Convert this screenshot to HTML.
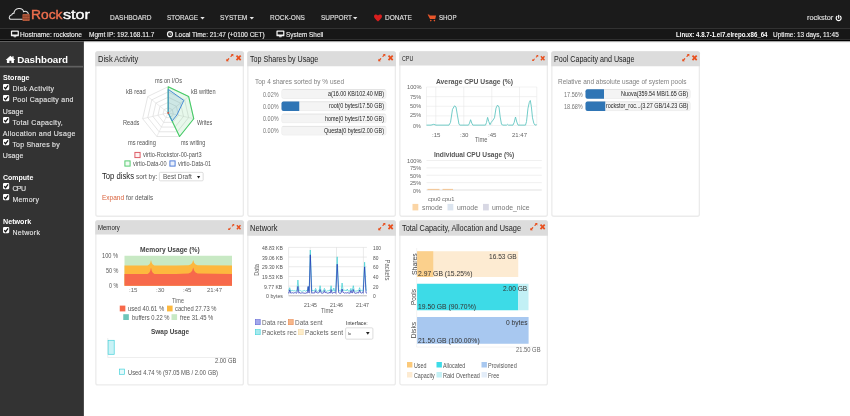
<!DOCTYPE html>
<html><head><meta charset="utf-8"><title>Rockstor Dashboard</title>
<style>
html,body{margin:0;padding:0;}
body{width:850px;height:416px;overflow:hidden;background:#fff;position:relative;font-family:'Liberation Sans', sans-serif;}
svg{position:absolute;overflow:visible}
</style></head><body>
<svg style="left:0;top:0" width="850" height="416" viewBox="0 0 850 416">
<rect x="0" y="0" width="850" height="28.2" fill="#1b1b1b"/>
<rect x="0" y="28.2" width="850" height="11.6" fill="#171717"/><rect x="0" y="28.2" width="850" height="0.6" fill="#2e2e2e"/>
<rect x="0" y="39.7" width="850" height="1.5" fill="#000"/><rect x="0" y="41.2" width="850" height="0.8" fill="rgba(0,0,0,0.22)"/><rect x="0" y="42.0" width="850" height="0.9" fill="rgba(0,0,0,0.06)"/>
<rect x="0" y="41.4" width="83.6" height="375" fill="#333"/><rect x="83.0" y="41.4" width="0.6" height="375" fill="#2a2a2a"/>
<rect x="0" y="65.8" width="83" height="1.7" fill="#606060"/>
<path d="M97.80 51.85 H241.40 A1.9500000000000002 1.9500000000000002 0 0 1 243.35 53.80 V214.30 A1.9500000000000002 1.9500000000000002 0 0 1 241.40 216.25 H97.80 A1.9500000000000002 1.9500000000000002 0 0 1 95.85 214.30 V53.80 A1.9500000000000002 1.9500000000000002 0 0 1 97.80 51.85 Z" fill="#fff" stroke="#ebebeb" stroke-width="1.3"/>
<path d="M97.60 51.20 H241.60 A2.4 2.4 0 0 1 244.00 53.60 V66.30 H95.20 V53.60 A2.4 2.4 0 0 1 97.60 51.20 Z" fill="#dcdcdc"/>
<path d="M249.80 51.85 H393.40 A1.9500000000000002 1.9500000000000002 0 0 1 395.35 53.80 V214.30 A1.9500000000000002 1.9500000000000002 0 0 1 393.40 216.25 H249.80 A1.9500000000000002 1.9500000000000002 0 0 1 247.85 214.30 V53.80 A1.9500000000000002 1.9500000000000002 0 0 1 249.80 51.85 Z" fill="#fff" stroke="#ebebeb" stroke-width="1.3"/>
<path d="M249.60 51.20 H393.60 A2.4 2.4 0 0 1 396.00 53.60 V66.30 H247.20 V53.60 A2.4 2.4 0 0 1 249.60 51.20 Z" fill="#dcdcdc"/>
<path d="M401.80 51.85 H545.40 A1.9500000000000002 1.9500000000000002 0 0 1 547.35 53.80 V214.30 A1.9500000000000002 1.9500000000000002 0 0 1 545.40 216.25 H401.80 A1.9500000000000002 1.9500000000000002 0 0 1 399.85 214.30 V53.80 A1.9500000000000002 1.9500000000000002 0 0 1 401.80 51.85 Z" fill="#fff" stroke="#ebebeb" stroke-width="1.3"/>
<path d="M401.60 51.20 H545.60 A2.4 2.4 0 0 1 548.00 53.60 V65.50 H399.20 V53.60 A2.4 2.4 0 0 1 401.60 51.20 Z" fill="#dcdcdc"/>
<path d="M553.80 51.85 H697.40 A1.9500000000000002 1.9500000000000002 0 0 1 699.35 53.80 V214.30 A1.9500000000000002 1.9500000000000002 0 0 1 697.40 216.25 H553.80 A1.9500000000000002 1.9500000000000002 0 0 1 551.85 214.30 V53.80 A1.9500000000000002 1.9500000000000002 0 0 1 553.80 51.85 Z" fill="#fff" stroke="#ebebeb" stroke-width="1.3"/>
<path d="M553.60 51.20 H697.60 A2.4 2.4 0 0 1 700.00 53.60 V66.30 H551.20 V53.60 A2.4 2.4 0 0 1 553.60 51.20 Z" fill="#dcdcdc"/>
<path d="M97.80 220.85 H241.40 A1.9500000000000002 1.9500000000000002 0 0 1 243.35 222.80 V383.00 A1.9500000000000002 1.9500000000000002 0 0 1 241.40 384.95 H97.80 A1.9500000000000002 1.9500000000000002 0 0 1 95.85 383.00 V222.80 A1.9500000000000002 1.9500000000000002 0 0 1 97.80 220.85 Z" fill="#fff" stroke="#ebebeb" stroke-width="1.3"/>
<path d="M97.60 220.20 H241.60 A2.4 2.4 0 0 1 244.00 222.60 V234.50 H95.20 V222.60 A2.4 2.4 0 0 1 97.60 220.20 Z" fill="#dcdcdc"/>
<path d="M249.80 220.85 H393.40 A1.9500000000000002 1.9500000000000002 0 0 1 395.35 222.80 V383.00 A1.9500000000000002 1.9500000000000002 0 0 1 393.40 384.95 H249.80 A1.9500000000000002 1.9500000000000002 0 0 1 247.85 383.00 V222.80 A1.9500000000000002 1.9500000000000002 0 0 1 249.80 220.85 Z" fill="#fff" stroke="#ebebeb" stroke-width="1.3"/>
<path d="M249.60 220.20 H393.60 A2.4 2.4 0 0 1 396.00 222.60 V235.70 H247.20 V222.60 A2.4 2.4 0 0 1 249.60 220.20 Z" fill="#dcdcdc"/>
<path d="M401.80 220.85 H545.40 A1.9500000000000002 1.9500000000000002 0 0 1 547.35 222.80 V383.00 A1.9500000000000002 1.9500000000000002 0 0 1 545.40 384.95 H401.80 A1.9500000000000002 1.9500000000000002 0 0 1 399.85 383.00 V222.80 A1.9500000000000002 1.9500000000000002 0 0 1 401.80 220.85 Z" fill="#fff" stroke="#ebebeb" stroke-width="1.3"/>
<path d="M401.60 220.20 H545.60 A2.4 2.4 0 0 1 548.00 222.60 V235.70 H399.20 V222.60 A2.4 2.4 0 0 1 401.60 220.20 Z" fill="#dcdcdc"/>
<path d="M160.40 172.35 H202.10 A1.0499999999999998 1.0499999999999998 0 0 1 203.15 173.40 V179.80 A1.0499999999999998 1.0499999999999998 0 0 1 202.10 180.85 H160.40 A1.0499999999999998 1.0499999999999998 0 0 1 159.35 179.80 V173.40 A1.0499999999999998 1.0499999999999998 0 0 1 160.40 172.35 Z" fill="#fff" stroke="#cfcfcf" stroke-width="0.7"/>
<path d="M283.50 89.30 H384.30 A2.0 2.0 0 0 1 386.30 91.30 V96.70 A2.0 2.0 0 0 1 384.30 98.70 H283.50 A2.0 2.0 0 0 1 281.50 96.70 V91.30 A2.0 2.0 0 0 1 283.50 89.30 Z" fill="#f4f4f4"/><path d="M283.50 89.50 H384.30 A1.8 1.8 0 0 1 386.10 91.30 V96.70 A1.8 1.8 0 0 1 384.30 98.50 H283.50 A1.8 1.8 0 0 1 281.70 96.70 V91.30 A1.8 1.8 0 0 1 283.50 89.50 Z" fill="none" stroke="rgba(0,0,0,0.07)" stroke-width="0.4"/><rect x="282.5" y="89.3" width="102.8" height="0.7" fill="rgba(0,0,0,0.07)"/>
<path d="M283.50 101.50 H384.30 A2.0 2.0 0 0 1 386.30 103.50 V108.90 A2.0 2.0 0 0 1 384.30 110.90 H283.50 A2.0 2.0 0 0 1 281.50 108.90 V103.50 A2.0 2.0 0 0 1 283.50 101.50 Z" fill="#f4f4f4"/><path d="M283.50 101.70 H384.30 A1.8 1.8 0 0 1 386.10 103.50 V108.90 A1.8 1.8 0 0 1 384.30 110.70 H283.50 A1.8 1.8 0 0 1 281.70 108.90 V103.50 A1.8 1.8 0 0 1 283.50 101.70 Z" fill="none" stroke="rgba(0,0,0,0.07)" stroke-width="0.4"/><rect x="282.5" y="101.5" width="102.8" height="0.7" fill="rgba(0,0,0,0.07)"/>
<path d="M283.50 101.50 H299.25 V110.90 H283.50 A2.0 2.0 0 0 1 281.50 108.90 V103.50 A2.0 2.0 0 0 1 283.50 101.50 Z" fill="#2f75b5"/>
<path d="M283.50 113.70 H384.30 A2.0 2.0 0 0 1 386.30 115.70 V121.10 A2.0 2.0 0 0 1 384.30 123.10 H283.50 A2.0 2.0 0 0 1 281.50 121.10 V115.70 A2.0 2.0 0 0 1 283.50 113.70 Z" fill="#f4f4f4"/><path d="M283.50 113.90 H384.30 A1.8 1.8 0 0 1 386.10 115.70 V121.10 A1.8 1.8 0 0 1 384.30 122.90 H283.50 A1.8 1.8 0 0 1 281.70 121.10 V115.70 A1.8 1.8 0 0 1 283.50 113.90 Z" fill="none" stroke="rgba(0,0,0,0.07)" stroke-width="0.4"/><rect x="282.5" y="113.7" width="102.8" height="0.7" fill="rgba(0,0,0,0.07)"/>
<path d="M283.50 125.90 H384.30 A2.0 2.0 0 0 1 386.30 127.90 V133.30 A2.0 2.0 0 0 1 384.30 135.30 H283.50 A2.0 2.0 0 0 1 281.50 133.30 V127.90 A2.0 2.0 0 0 1 283.50 125.90 Z" fill="#f4f4f4"/><path d="M283.50 126.10 H384.30 A1.8 1.8 0 0 1 386.10 127.90 V133.30 A1.8 1.8 0 0 1 384.30 135.10 H283.50 A1.8 1.8 0 0 1 281.70 133.30 V127.90 A1.8 1.8 0 0 1 283.50 126.10 Z" fill="none" stroke="rgba(0,0,0,0.07)" stroke-width="0.4"/><rect x="282.5" y="125.9" width="102.8" height="0.7" fill="rgba(0,0,0,0.07)"/>
<path d="M587.50 89.30 H688.50 A2.0 2.0 0 0 1 690.50 91.30 V96.70 A2.0 2.0 0 0 1 688.50 98.70 H587.50 A2.0 2.0 0 0 1 585.50 96.70 V91.30 A2.0 2.0 0 0 1 587.50 89.30 Z" fill="#f4f4f4"/><path d="M587.50 89.50 H688.50 A1.8 1.8 0 0 1 690.30 91.30 V96.70 A1.8 1.8 0 0 1 688.50 98.50 H587.50 A1.8 1.8 0 0 1 585.70 96.70 V91.30 A1.8 1.8 0 0 1 587.50 89.50 Z" fill="none" stroke="rgba(0,0,0,0.07)" stroke-width="0.4"/><rect x="586.5" y="89.3" width="103" height="0.7" fill="rgba(0,0,0,0.07)"/>
<path d="M587.50 89.30 H604.00 V98.70 H587.50 A2.0 2.0 0 0 1 585.50 96.70 V91.30 A2.0 2.0 0 0 1 587.50 89.30 Z" fill="#2f75b5"/>
<path d="M587.50 101.50 H688.50 A2.0 2.0 0 0 1 690.50 103.50 V108.90 A2.0 2.0 0 0 1 688.50 110.90 H587.50 A2.0 2.0 0 0 1 585.50 108.90 V103.50 A2.0 2.0 0 0 1 587.50 101.50 Z" fill="#f4f4f4"/><path d="M587.50 101.70 H688.50 A1.8 1.8 0 0 1 690.30 103.50 V108.90 A1.8 1.8 0 0 1 688.50 110.70 H587.50 A1.8 1.8 0 0 1 585.70 108.90 V103.50 A1.8 1.8 0 0 1 587.50 101.70 Z" fill="none" stroke="rgba(0,0,0,0.07)" stroke-width="0.4"/><rect x="586.5" y="101.5" width="103" height="0.7" fill="rgba(0,0,0,0.07)"/>
<path d="M587.50 101.50 H605.25 V110.90 H587.50 A2.0 2.0 0 0 1 585.50 108.90 V103.50 A2.0 2.0 0 0 1 587.50 101.50 Z" fill="#2f75b5"/>
<path d="M346.65 327.85 H371.85 A1.0499999999999998 1.0499999999999998 0 0 1 372.90 328.90 V338.10 A1.0499999999999998 1.0499999999999998 0 0 1 371.85 339.15 H346.65 A1.0499999999999998 1.0499999999999998 0 0 1 345.60 338.10 V328.90 A1.0499999999999998 1.0499999999999998 0 0 1 346.65 327.85 Z" fill="#fff" stroke="#cfcfcf" stroke-width="0.7"/>
<rect x="417" y="251.25" width="101.25" height="25.75" fill="#fdebd2"/>
<rect x="417" y="251.25" width="16.25" height="25.75" fill="#fbd08c"/>
<rect x="417" y="283.75" width="101.25" height="26.5" fill="#3ddbe7"/>
<rect x="518.25" y="283.75" width="10.25" height="26.5" fill="#c2f0f5"/>
<rect x="417" y="317" width="111.6" height="26.75" fill="#a8c8f0"/>
<rect x="416.6" y="248" width="0.5" height="99" fill="#e6e6e6"/>
<rect x="416.6" y="346.8" width="124" height="0.5" fill="#e6e6e6"/>
<rect x="407" y="362" width="5.4" height="5.5" fill="#fbc97a"/>
<rect x="436.5" y="362" width="5.4" height="5.5" fill="#3ddbe7"/>
<rect x="481.5" y="362" width="5.4" height="5.5" fill="#a8c8f0"/>
<rect x="407" y="372" width="5.4" height="5.5" fill="#fdebd2"/>
<rect x="436.5" y="372" width="5.4" height="5.5" fill="#c2f0f5"/>
<rect x="481.5" y="372" width="5.4" height="5.5" fill="#e3edf9"/>
</svg>
<svg style="left:225.90px;top:54.25px" width="15.40" height="7.60" viewBox="0 0 15.4 7.6"><g fill="#e8501f" stroke="none"><path d="M7.3 0 L7.3 2.5 L4.8 0 Z"/><path d="M0.4 7.2 L0.4 4.7 L2.9 7.2 Z"/></g><path d="M6.6 0.7 L5.0 2.45 M1.1 6.5 L2.7 4.75" stroke="#e8501f" stroke-width="1.2" stroke-linecap="round" fill="none"/><path d="M10.5 1.6 L14.7 6.1 M14.7 1.6 L10.5 6.1" stroke="#e8501f" stroke-width="1.75" fill="none"/></svg>
<svg style="left:377.90px;top:54.25px" width="15.40" height="7.60" viewBox="0 0 15.4 7.6"><g fill="#e8501f" stroke="none"><path d="M7.3 0 L7.3 2.5 L4.8 0 Z"/><path d="M0.4 7.2 L0.4 4.7 L2.9 7.2 Z"/></g><path d="M6.6 0.7 L5.0 2.45 M1.1 6.5 L2.7 4.75" stroke="#e8501f" stroke-width="1.2" stroke-linecap="round" fill="none"/><path d="M10.5 1.6 L14.7 6.1 M14.7 1.6 L10.5 6.1" stroke="#e8501f" stroke-width="1.75" fill="none"/></svg>
<svg style="left:532.12px;top:54.52px" width="13.09" height="6.46" viewBox="0 0 15.4 7.6"><g fill="#e8501f" stroke="none"><path d="M7.3 0 L7.3 2.5 L4.8 0 Z"/><path d="M0.4 7.2 L0.4 4.7 L2.9 7.2 Z"/></g><path d="M6.6 0.7 L5.0 2.45 M1.1 6.5 L2.7 4.75" stroke="#e8501f" stroke-width="1.2" stroke-linecap="round" fill="none"/><path d="M10.5 1.6 L14.7 6.1 M14.7 1.6 L10.5 6.1" stroke="#e8501f" stroke-width="1.75" fill="none"/></svg>
<svg style="left:681.90px;top:54.25px" width="15.40" height="7.60" viewBox="0 0 15.4 7.6"><g fill="#e8501f" stroke="none"><path d="M7.3 0 L7.3 2.5 L4.8 0 Z"/><path d="M0.4 7.2 L0.4 4.7 L2.9 7.2 Z"/></g><path d="M6.6 0.7 L5.0 2.45 M1.1 6.5 L2.7 4.75" stroke="#e8501f" stroke-width="1.2" stroke-linecap="round" fill="none"/><path d="M10.5 1.6 L14.7 6.1 M14.7 1.6 L10.5 6.1" stroke="#e8501f" stroke-width="1.75" fill="none"/></svg>
<svg style="left:228.12px;top:223.53px" width="13.09" height="6.46" viewBox="0 0 15.4 7.6"><g fill="#e8501f" stroke="none"><path d="M7.3 0 L7.3 2.5 L4.8 0 Z"/><path d="M0.4 7.2 L0.4 4.7 L2.9 7.2 Z"/></g><path d="M6.6 0.7 L5.0 2.45 M1.1 6.5 L2.7 4.75" stroke="#e8501f" stroke-width="1.2" stroke-linecap="round" fill="none"/><path d="M10.5 1.6 L14.7 6.1 M14.7 1.6 L10.5 6.1" stroke="#e8501f" stroke-width="1.75" fill="none"/></svg>
<svg style="left:377.90px;top:223.45px" width="15.40" height="7.60" viewBox="0 0 15.4 7.6"><g fill="#e8501f" stroke="none"><path d="M7.3 0 L7.3 2.5 L4.8 0 Z"/><path d="M0.4 7.2 L0.4 4.7 L2.9 7.2 Z"/></g><path d="M6.6 0.7 L5.0 2.45 M1.1 6.5 L2.7 4.75" stroke="#e8501f" stroke-width="1.2" stroke-linecap="round" fill="none"/><path d="M10.5 1.6 L14.7 6.1 M14.7 1.6 L10.5 6.1" stroke="#e8501f" stroke-width="1.75" fill="none"/></svg>
<svg style="left:529.90px;top:223.45px" width="15.40" height="7.60" viewBox="0 0 15.4 7.6"><g fill="#e8501f" stroke="none"><path d="M7.3 0 L7.3 2.5 L4.8 0 Z"/><path d="M0.4 7.2 L0.4 4.7 L2.9 7.2 Z"/></g><path d="M6.6 0.7 L5.0 2.45 M1.1 6.5 L2.7 4.75" stroke="#e8501f" stroke-width="1.2" stroke-linecap="round" fill="none"/><path d="M10.5 1.6 L14.7 6.1 M14.7 1.6 L10.5 6.1" stroke="#e8501f" stroke-width="1.75" fill="none"/></svg>
<svg style="left:2.9px;top:83.8px" width="6.2" height="6.2" viewBox="0 0 10 10"><rect x="0" y="0" width="10" height="10" rx="1.8" fill="#fff"/><path d="M2 5.2 L4.2 7.6 L8.2 2.4" stroke="#111" stroke-width="2" fill="none"/></svg>
<svg style="left:2.9px;top:94.8px" width="6.2" height="6.2" viewBox="0 0 10 10"><rect x="0" y="0" width="10" height="10" rx="1.8" fill="#fff"/><path d="M2 5.2 L4.2 7.6 L8.2 2.4" stroke="#111" stroke-width="2" fill="none"/></svg>
<svg style="left:2.9px;top:116.9px" width="6.2" height="6.2" viewBox="0 0 10 10"><rect x="0" y="0" width="10" height="10" rx="1.8" fill="#fff"/><path d="M2 5.2 L4.2 7.6 L8.2 2.4" stroke="#111" stroke-width="2" fill="none"/></svg>
<svg style="left:2.9px;top:139.0px" width="6.2" height="6.2" viewBox="0 0 10 10"><rect x="0" y="0" width="10" height="10" rx="1.8" fill="#fff"/><path d="M2 5.2 L4.2 7.6 L8.2 2.4" stroke="#111" stroke-width="2" fill="none"/></svg>
<svg style="left:2.9px;top:183.2px" width="6.2" height="6.2" viewBox="0 0 10 10"><rect x="0" y="0" width="10" height="10" rx="1.8" fill="#fff"/><path d="M2 5.2 L4.2 7.6 L8.2 2.4" stroke="#111" stroke-width="2" fill="none"/></svg>
<svg style="left:2.9px;top:194.3px" width="6.2" height="6.2" viewBox="0 0 10 10"><rect x="0" y="0" width="10" height="10" rx="1.8" fill="#fff"/><path d="M2 5.2 L4.2 7.6 L8.2 2.4" stroke="#111" stroke-width="2" fill="none"/></svg>
<svg style="left:2.9px;top:227.4px" width="6.2" height="6.2" viewBox="0 0 10 10"><rect x="0" y="0" width="10" height="10" rx="1.8" fill="#fff"/><path d="M2 5.2 L4.2 7.6 L8.2 2.4" stroke="#111" stroke-width="2" fill="none"/></svg>
<svg style="left:196.9px;top:175.7px" width="3.2" height="2.4" viewBox="0 0 3.2 2.4"><path d="M0 0 H3.2 L1.6 2.4 Z" fill="#222"/></svg>
<svg style="left:0;top:0" width="850" height="416" viewBox="0 0 850 416"><polygon points="168.20,107.66 172.30,109.63 173.31,114.07 170.47,117.62 165.93,117.62 163.09,114.07 164.10,109.63" fill="none" stroke="#d2d2d2" stroke-width="0.55"/><polygon points="168.20,102.42 176.39,106.37 178.42,115.23 172.75,122.34 163.65,122.34 157.98,115.23 160.01,106.37" fill="none" stroke="#d2d2d2" stroke-width="0.55"/><polygon points="168.20,97.18 180.49,103.10 183.53,116.40 175.02,127.06 161.38,127.06 152.87,116.40 155.91,103.10" fill="none" stroke="#d2d2d2" stroke-width="0.55"/><polygon points="168.20,91.94 184.59,99.83 188.63,117.56 177.29,131.78 159.11,131.78 147.77,117.56 151.81,99.83" fill="none" stroke="#d2d2d2" stroke-width="0.55"/><polygon points="168.20,86.70 188.68,96.56 193.74,118.73 179.57,136.51 156.83,136.51 142.66,118.73 147.72,96.56" fill="none" stroke="#d2d2d2" stroke-width="0.55"/><line x1="168.2" y1="112.9" x2="168.20" y2="86.70" stroke="#d8d8d8" stroke-width="0.5"/><line x1="168.2" y1="112.9" x2="188.68" y2="96.56" stroke="#d8d8d8" stroke-width="0.5"/><line x1="168.2" y1="112.9" x2="193.74" y2="118.73" stroke="#d8d8d8" stroke-width="0.5"/><line x1="168.2" y1="112.9" x2="179.57" y2="136.51" stroke="#d8d8d8" stroke-width="0.5"/><line x1="168.2" y1="112.9" x2="156.83" y2="136.51" stroke="#d8d8d8" stroke-width="0.5"/><line x1="168.2" y1="112.9" x2="142.66" y2="118.73" stroke="#d8d8d8" stroke-width="0.5"/><line x1="168.2" y1="112.9" x2="147.72" y2="96.56" stroke="#d8d8d8" stroke-width="0.5"/><polygon points="168.20,86.70 188.68,96.56 193.74,118.73 179.57,136.51 168.20,112.90" fill="rgba(60,200,90,0.12)" stroke="#45cc66" stroke-width="1.1" stroke-linejoin="round"/><polygon points="168.20,89.30 183.84,100.43 176.97,114.90 172.10,121.01 168.20,112.90" fill="rgba(70,140,200,0.16)" stroke="#4a8fd6" stroke-width="1.0" stroke-linejoin="round"/><circle cx="168.2" cy="112.9" r="0.9" fill="#e0503a"/><rect x="134.9" y="152.4" width="5.2" height="5.2" fill="#fdf1f1" stroke="#dc5560" stroke-width="0.95"/><rect x="124.9" y="160.9" width="5.2" height="5.2" fill="#f1fbf3" stroke="#4fc96a" stroke-width="0.95"/><rect x="169.9" y="160.9" width="5.2" height="5.2" fill="#eaf0fb" stroke="#4a78d6" stroke-width="0.95"/></svg>
<svg style="left:0;top:0" width="850" height="416" viewBox="0 0 850 416"><line x1="426.5" y1="87.00" x2="536.75" y2="87.00" stroke="#e4e4e4" stroke-width="0.5"/><line x1="426.5" y1="96.62" x2="536.75" y2="96.62" stroke="#e4e4e4" stroke-width="0.5"/><line x1="426.5" y1="106.25" x2="536.75" y2="106.25" stroke="#e4e4e4" stroke-width="0.5"/><line x1="426.5" y1="115.88" x2="536.75" y2="115.88" stroke="#e4e4e4" stroke-width="0.5"/><line x1="426.5" y1="125.50" x2="536.75" y2="125.50" stroke="#e4e4e4" stroke-width="0.5"/><line x1="426.5" y1="87" x2="426.5" y2="125.5" stroke="#e4e4e4" stroke-width="0.5"/><line x1="435.75" y1="87" x2="435.75" y2="125.5" stroke="#e4e4e4" stroke-width="0.5"/><line x1="463.75" y1="87" x2="463.75" y2="125.5" stroke="#e4e4e4" stroke-width="0.5"/><line x1="491.75" y1="87" x2="491.75" y2="125.5" stroke="#e4e4e4" stroke-width="0.5"/><line x1="519.5" y1="87" x2="519.5" y2="125.5" stroke="#e4e4e4" stroke-width="0.5"/><line x1="536.75" y1="87" x2="536.75" y2="125.5" stroke="#e4e4e4" stroke-width="0.5"/><polyline points="426.50,125.11 431.00,125.11 433.75,124.34 436.00,125.11 449.00,125.11 450.50,122.42 452.50,109.33 454.50,105.86 456.00,107.02 457.50,115.88 459.00,124.34 460.00,125.11 468.50,125.11 469.50,123.19 470.60,119.72 471.80,123.19 472.80,125.11 485.50,125.11 486.50,122.42 487.60,117.41 488.80,121.65 490.00,124.73 491.20,122.42 493.00,120.11 494.50,117.80 496.00,108.17 497.50,105.09 499.00,107.02 500.20,117.03 501.50,124.34 503.00,125.11 506.50,125.11 507.50,124.34 508.50,125.11 513.00,125.11 514.20,122.42 515.50,117.03 516.80,122.03 518.00,125.11 525.50,125.11 526.50,121.65 528.00,108.17 529.30,102.40 530.30,100.47 531.30,106.25 532.50,117.80 533.80,123.19 535.00,125.11 536.75,124.73" fill="none" stroke="#62c6c2" stroke-width="0.9" stroke-linejoin="round"/><line x1="426.5" y1="160.50" x2="541.75" y2="160.50" stroke="#e6e6e6" stroke-width="0.6"/><line x1="426.5" y1="167.88" x2="541.75" y2="167.88" stroke="#e6e6e6" stroke-width="0.6"/><line x1="426.5" y1="175.25" x2="541.75" y2="175.25" stroke="#e6e6e6" stroke-width="0.6"/><line x1="426.5" y1="182.62" x2="541.75" y2="182.62" stroke="#e6e6e6" stroke-width="0.6"/><line x1="426.5" y1="190.00" x2="541.75" y2="190.00" stroke="#cfcfcf" stroke-width="0.6"/><rect x="427.5" y="188.9" width="12" height="0.9" fill="#f3c089"/><rect x="442.5" y="188.9" width="10.5" height="0.9" fill="#f3c089"/><rect x="412.5" y="203.9" width="5.8" height="6.5" fill="#fbd5a5"/><rect x="447.5" y="203.9" width="5.8" height="6.5" fill="#dbe4ef"/><rect x="483" y="203.9" width="5.8" height="6.5" fill="#d8d8e4"/></svg>
<svg style="left:0;top:0" width="850" height="416" viewBox="0 0 850 416"><rect x="124.5" y="255.75" width="107.5" height="30.0" fill="#c8e9c4"/><polygon points="124.50,265.60 147.60,265.60 149.20,264.59 150.20,263.08 151.00,260.00 151.80,263.08 152.80,264.59 154.40,265.60 176.00,265.60 188.50,265.15 190.60,264.48 192.20,262.91 193.20,260.00 194.20,262.91 195.60,264.48 197.60,265.26 232.00,265.60 232.00,285.75 124.50,285.75" fill="#fdb83e"/><polygon points="124.50,273.90 147.60,273.90 149.20,272.73 150.20,270.97 151.00,267.40 151.80,270.97 152.80,272.73 154.40,273.90 176.00,273.90 188.50,273.38 190.60,272.60 192.20,270.78 193.20,267.40 194.20,270.78 195.60,272.60 197.60,273.51 232.00,273.90 232.00,285.75 124.50,285.75" fill="#f7694b"/><rect x="119.75" y="305.6" width="5.6" height="5.8" fill="#f7694b"/><rect x="167" y="305.6" width="5.6" height="5.8" fill="#fdb83e"/><rect x="123.25" y="314.2" width="5.6" height="5.8" fill="#6dc5b9"/><rect x="171.5" y="314.2" width="5.6" height="5.8" fill="#c8e9c4"/><line x1="107.75" y1="338" x2="107.75" y2="357.5" stroke="#ddd" stroke-width="0.5"/><line x1="107.75" y1="357.5" x2="235.25" y2="357.5" stroke="#ddd" stroke-width="0.5"/><rect x="108.1" y="340.3" width="6.1" height="14" fill="#c9f2f6" stroke="#45d2da" stroke-width="0.7"/><rect x="119.6" y="369.1" width="5" height="5.2" fill="#e4f9fb" stroke="#45d2da" stroke-width="0.7"/></svg>
<svg style="left:365.8px;top:332.3px" width="3.6" height="2.8" viewBox="0 0 3.6 2.8"><path d="M0 0 H3.6 L1.8 2.8 Z" fill="#222"/></svg>
<svg style="left:0;top:0" width="850" height="416" viewBox="0 0 850 416"><line x1="288.6" y1="247.40" x2="366.9" y2="247.40" stroke="#dcdcdc" stroke-width="0.6"/><line x1="288.6" y1="257.08" x2="366.9" y2="257.08" stroke="#dcdcdc" stroke-width="0.6"/><line x1="288.6" y1="266.76" x2="366.9" y2="266.76" stroke="#dcdcdc" stroke-width="0.6"/><line x1="288.6" y1="276.44" x2="366.9" y2="276.44" stroke="#dcdcdc" stroke-width="0.6"/><line x1="288.6" y1="286.12" x2="366.9" y2="286.12" stroke="#dcdcdc" stroke-width="0.6"/><line x1="288.6" y1="295.80" x2="366.9" y2="295.80" stroke="#a8a8a8" stroke-width="0.8"/><line x1="288.6" y1="247.4" x2="288.6" y2="295.8" stroke="#dcdcdc" stroke-width="0.6"/><line x1="310.2" y1="247.4" x2="310.2" y2="295.8" stroke="#dcdcdc" stroke-width="0.6"/><line x1="336.5" y1="247.4" x2="336.5" y2="295.8" stroke="#dcdcdc" stroke-width="0.6"/><line x1="363.4" y1="247.4" x2="363.4" y2="295.8" stroke="#dcdcdc" stroke-width="0.6"/><polyline points="288.60,290.86 288.70,290.38 289.70,287.70 290.70,291.40 291.30,290.73 292.20,290.29 293.10,290.84 294.00,290.79 294.90,290.70 295.80,291.18 296.70,290.79 296.80,291.15 297.90,280.00 299.00,290.31 299.40,290.64 300.30,290.45 301.20,291.29 302.10,291.04 303.00,291.29 303.90,290.43 304.80,290.57 305.70,291.35 306.60,290.22 307.20,290.84 308.20,286.80 308.80,290.92 309.20,290.22 310.30,250.00 311.80,291.31 312.00,290.24 312.90,290.62 313.80,290.66 314.70,291.21 314.70,290.64 315.60,288.40 316.50,290.47 317.40,291.38 318.30,290.77 319.10,291.08 320.10,285.70 321.10,291.30 321.90,291.33 322.80,291.17 323.50,291.00 324.40,288.40 325.30,290.24 325.50,291.11 326.40,291.36 327.30,290.84 328.20,290.87 329.10,290.39 330.00,290.78 330.10,290.49 331.10,285.70 332.10,291.26 332.70,290.63 332.90,291.10 333.80,288.00 334.70,291.28 335.40,290.80 335.70,291.33 337.20,256.80 338.70,290.44 339.00,290.61 339.90,290.85 340.80,291.07 341.10,291.19 342.10,283.00 343.10,290.73 343.50,290.20 344.40,290.21 345.30,290.39 346.20,290.55 346.40,290.86 347.30,289.00 348.20,291.17 348.90,291.02 349.80,291.12 350.00,290.52 350.90,288.40 351.80,291.24 352.30,290.63 353.30,285.70 354.30,291.26 355.20,291.05 356.10,291.32 357.00,290.48 357.90,290.92 358.60,290.90 359.60,287.70 360.60,291.14 361.50,290.38 362.40,290.94 363.10,291.08 364.60,262.20 366.10,290.23 366.90,290.25" fill="none" stroke="#3fd0d3" stroke-width="0.7" stroke-linejoin="round"/><polyline points="288.60,292.66 288.80,293.29 289.70,289.80 290.60,293.08 291.30,293.06 292.20,292.59 293.10,293.13 294.00,292.98 294.90,292.62 295.80,292.79 296.70,293.22 296.90,292.94 297.90,286.40 298.90,293.25 299.40,292.51 300.30,293.13 301.20,293.09 302.10,292.68 303.00,293.04 303.90,293.06 304.80,293.24 305.70,293.23 306.60,292.83 307.20,293.16 308.20,286.40 308.90,292.84 309.20,293.00 310.30,254.80 311.70,293.19 312.00,293.11 312.90,292.82 313.80,293.00 314.70,292.94 314.80,293.01 315.60,290.50 316.40,292.59 316.50,292.53 317.40,292.91 318.30,292.84 319.20,292.61 319.20,292.52 320.10,289.50 321.00,292.77 321.90,293.15 322.80,293.18 323.60,292.75 324.40,290.50 325.20,292.83 325.50,292.57 326.40,292.65 327.30,293.10 328.20,293.15 329.10,292.71 330.00,292.55 330.20,293.19 331.10,289.50 332.00,293.27 332.70,293.14 333.60,292.54 334.50,292.59 335.40,292.82 335.80,293.29 337.20,264.20 338.60,292.57 339.00,292.96 339.90,293.22 340.80,293.27 341.20,292.74 342.10,289.00 343.00,292.53 343.50,292.53 344.40,293.11 345.30,292.74 346.20,293.09 347.10,292.64 348.00,292.82 348.90,293.07 349.80,293.16 350.10,293.28 350.90,290.50 351.70,292.79 352.40,292.91 353.30,289.50 354.20,292.72 354.30,292.72 355.20,293.24 356.10,293.12 357.00,292.85 357.90,292.62 358.70,293.04 359.60,290.00 360.50,292.50 360.60,292.81 361.50,293.08 362.40,292.57 363.20,293.24 364.60,266.90 366.00,292.86 366.90,293.14" fill="none" stroke="#1f2fb5" stroke-width="0.7" stroke-linejoin="round"/><rect x="255.3" y="319.6" width="4.9" height="5.1" fill="#a3a8ec" stroke="#6268d6" stroke-width="0.6"/><rect x="288.3" y="319.6" width="4.9" height="5.1" fill="#f6b78b" stroke="#ea8a52" stroke-width="0.6"/><rect x="255.3" y="329.6" width="4.9" height="5.1" fill="#a6eaee" stroke="#45d2da" stroke-width="0.6"/><rect x="298.3" y="329.6" width="4.9" height="5.1" fill="#fdecc9" stroke="#f4d9a2" stroke-width="0.6"/></svg>
<svg style="left:0;top:0" width="850" height="416" viewBox="0 0 850 416"><path d="M22.4 19.3 H10.8 C8.7 19.3 8.5 15.3 11.9 14.7 C12.1 13.6 13 13.1 13.9 13.4 C14.5 7.3 22.6 6.9 23.6 11.7 C26 10.6 28.3 12 28.3 14.0" fill="none" stroke="#e4e4e4" stroke-width="1.05" stroke-linecap="round"/><rect x="22.4" y="14.0" width="7.4" height="7.0" rx="0.9" fill="#b35a3c"/><path d="M22.4 16.2 H29.8 M22.4 18.7 H29.8" stroke="#6e2f1e" stroke-width="0.55"/><path d="M24.9 14 V21 M27.4 14 V21" stroke="#8a3f28" stroke-width="0.3"/><path d="M200.3 17 h4.4 l-2.2 2.4 z" fill="#e6e6e6"/><path d="M249.6 17 h4.4 l-2.2 2.4 z" fill="#e6e6e6"/><path d="M353 17 h4.4 l-2.2 2.4 z" fill="#e6e6e6"/><path d="M378 21.4 C375.4 19.2 374 17.8 374 16.2 C374 14.4 376.6 13.8 378 15.6 C379.4 13.8 382 14.4 382 16.2 C382 17.8 380.6 19.2 378 21.4 Z" fill="#d81e1e"/><path d="M427.6 14.6 h1.6 l0.5 1 h6.4 l-0.9 3.4 h-5.2 z" fill="#e8562a"/><circle cx="430.8" cy="20.6" r="0.8" fill="#e8562a"/><circle cx="434.4" cy="20.6" r="0.8" fill="#e8562a"/><path d="M837.0 16.3 A2.45 2.45 0 1 0 840.3 16.3" fill="none" stroke="#fff" stroke-width="1.15" stroke-linecap="round"/><path d="M838.65 15.3 V18.2" stroke="#fff" stroke-width="1.1" stroke-linecap="round"/><rect x="10.9" y="30.6" width="8" height="5.7" rx="0.9" fill="#f4f4f4"/><rect x="12.15" y="31.75" width="5.5" height="2.8" rx="0.3" fill="#171717"/><path d="M13.3 36.2 H16.5 L15.9 37.2 H13.9 Z" fill="#f4f4f4"/><rect x="276.4" y="30.6" width="8" height="5.7" rx="0.9" fill="#f4f4f4"/><rect x="277.65" y="31.75" width="5.5" height="2.8" rx="0.3" fill="#171717"/><path d="M278.79999999999995 36.2 H282.0 L281.4 37.2 H279.4 Z" fill="#f4f4f4"/><circle cx="170" cy="34.15" r="2.5" fill="none" stroke="#f2f2f2" stroke-width="1.2"/><path d="M170 32.7 V34.4 H171.1" stroke="#d0d0d0" stroke-width="0.7" fill="none"/><path d="M5.7 59.9 L10.4 55.8 L12.3 57.4 L12.3 56.3 L13.6 56.3 L13.6 58.6 L15.1 59.9 L13.9 59.9 L13.9 63.1 L11.4 63.1 L11.4 60.7 L9.4 60.7 L9.4 63.1 L6.9 63.1 L6.9 59.9 Z" fill="#fff"/></svg>
<div style="position:absolute;left:0;top:0;width:850px;height:416px;will-change:transform;">
<span style="position:absolute;white-space:pre;font-size:13.6px;line-height:16.32px;color:#ef6f4e;font-weight:normal;-webkit-text-stroke:0.4px #ef6f4e;left:31px;top:6.94px;transform:scaleX(1.0166);transform-origin:0 50%;">Rock</span>
<span style="position:absolute;white-space:pre;font-size:13.6px;line-height:16.32px;color:#fff;font-weight:normal;-webkit-text-stroke:0.4px #fff;left:62.5px;top:6.94px;transform:scaleX(1.1909);transform-origin:0 50%;">stor</span>
<span style="position:absolute;white-space:pre;font-size:6.9px;line-height:8.28px;color:#dcdcdc;font-weight:normal;-webkit-text-stroke:0.18px #dcdcdc;left:110px;top:13.86px;transform:scaleX(0.9506);transform-origin:0 50%;">DASHBOARD</span>
<span style="position:absolute;white-space:pre;font-size:6.9px;line-height:8.28px;color:#dcdcdc;font-weight:normal;-webkit-text-stroke:0.18px #dcdcdc;left:167px;top:13.86px;transform:scaleX(0.9232);transform-origin:0 50%;">STORAGE</span>
<span style="position:absolute;white-space:pre;font-size:6.9px;line-height:8.28px;color:#dcdcdc;font-weight:normal;-webkit-text-stroke:0.18px #dcdcdc;left:220.4px;top:13.86px;transform:scaleX(0.9667);transform-origin:0 50%;">SYSTEM</span>
<span style="position:absolute;white-space:pre;font-size:6.9px;line-height:8.28px;color:#dcdcdc;font-weight:normal;-webkit-text-stroke:0.18px #dcdcdc;left:269.8px;top:13.86px;transform:scaleX(0.9397);transform-origin:0 50%;">ROCK-ONS</span>
<span style="position:absolute;white-space:pre;font-size:6.9px;line-height:8.28px;color:#dcdcdc;font-weight:normal;-webkit-text-stroke:0.18px #dcdcdc;left:320.5px;top:13.86px;transform:scaleX(0.9341);transform-origin:0 50%;">SUPPORT</span>
<span style="position:absolute;white-space:pre;font-size:6.9px;line-height:8.28px;color:#dcdcdc;font-weight:normal;-webkit-text-stroke:0.18px #dcdcdc;left:385px;top:13.86px;transform:scaleX(0.9502);transform-origin:0 50%;">DONATE</span>
<span style="position:absolute;white-space:pre;font-size:6.9px;line-height:8.28px;color:#dcdcdc;font-weight:normal;-webkit-text-stroke:0.18px #dcdcdc;left:438.5px;top:13.86px;transform:scaleX(0.8960);transform-origin:0 50%;">SHOP</span>
<span style="position:absolute;white-space:pre;font-size:7.0px;line-height:8.4px;color:#dcdcdc;font-weight:normal;-webkit-text-stroke:0.18px #dcdcdc;left:806.75px;top:14.30px;transform:scaleX(1.0540);transform-origin:0 50%;">rockstor</span>
<span style="position:absolute;white-space:pre;font-size:6.5px;line-height:7.8px;color:#f2f2f2;font-weight:normal;-webkit-text-stroke:0.12px #f2f2f2;left:20px;top:30.60px;transform:scaleX(1.0094);transform-origin:0 50%;">Hostname: rockstone</span>
<span style="position:absolute;white-space:pre;font-size:6.5px;line-height:7.8px;color:#f2f2f2;font-weight:normal;-webkit-text-stroke:0.12px #f2f2f2;left:89px;top:30.60px;transform:scaleX(1.0034);transform-origin:0 50%;">Mgmt IP: 192.168.11.7</span>
<span style="position:absolute;white-space:pre;font-size:6.5px;line-height:7.8px;color:#f2f2f2;font-weight:normal;-webkit-text-stroke:0.12px #f2f2f2;left:174.5px;top:30.60px;transform:scaleX(0.9910);transform-origin:0 50%;">Local Time: 21:47 (+0100 CET)</span>
<span style="position:absolute;white-space:pre;font-size:6.5px;line-height:7.8px;color:#f2f2f2;font-weight:normal;-webkit-text-stroke:0.12px #f2f2f2;left:285.6px;top:30.60px;transform:scaleX(0.9832);transform-origin:0 50%;">System Shell</span>
<span style="position:absolute;white-space:pre;font-size:6.4px;line-height:7.68px;color:#fff;font-weight:bold;left:676px;top:30.66px;transform:scaleX(0.9575);transform-origin:0 50%;">Linux: 4.8.7-1.el7.elrepo.x86_64</span>
<span style="position:absolute;white-space:pre;font-size:6.5px;line-height:7.8px;color:#f2f2f2;font-weight:normal;-webkit-text-stroke:0.12px #f2f2f2;left:773px;top:30.60px;transform:scaleX(0.9906);transform-origin:0 50%;">Uptime: 13 days, 11:45</span>
<span style="position:absolute;white-space:pre;font-size:9.8px;line-height:11.76px;color:#fff;font-weight:bold;left:17.2px;top:53.72px;letter-spacing:-0.046px;">Dashboard</span>
<span style="position:absolute;white-space:pre;font-size:7.4px;line-height:8.88px;color:#fff;font-weight:bold;left:3px;top:73.86px;transform:scaleX(0.9625);transform-origin:0 50%;">Storage</span>
<span style="position:absolute;white-space:pre;font-size:7.0px;line-height:8.4px;color:#e4e4e4;font-weight:normal;-webkit-text-stroke:0.12px #e4e4e4;left:12.4px;top:85.30px;letter-spacing:0.355px;">Disk Activity</span>
<span style="position:absolute;white-space:pre;font-size:7.0px;line-height:8.4px;color:#e4e4e4;font-weight:normal;-webkit-text-stroke:0.12px #e4e4e4;left:12.4px;top:96.40px;letter-spacing:0.267px;">Pool Capacity and</span>
<span style="position:absolute;white-space:pre;font-size:7.0px;line-height:8.4px;color:#e4e4e4;font-weight:normal;-webkit-text-stroke:0.12px #e4e4e4;left:2.8px;top:107.50px;letter-spacing:0.116px;">Usage</span>
<span style="position:absolute;white-space:pre;font-size:7.0px;line-height:8.4px;color:#e4e4e4;font-weight:normal;-webkit-text-stroke:0.12px #e4e4e4;left:12.4px;top:118.60px;letter-spacing:0.351px;">Total Capacity,</span>
<span style="position:absolute;white-space:pre;font-size:7.0px;line-height:8.4px;color:#e4e4e4;font-weight:normal;-webkit-text-stroke:0.12px #e4e4e4;left:2.8px;top:129.60px;letter-spacing:0.334px;">Allocation and Usage</span>
<span style="position:absolute;white-space:pre;font-size:7.0px;line-height:8.4px;color:#e4e4e4;font-weight:normal;-webkit-text-stroke:0.12px #e4e4e4;left:12.4px;top:140.70px;letter-spacing:0.213px;">Top Shares by</span>
<span style="position:absolute;white-space:pre;font-size:7.0px;line-height:8.4px;color:#e4e4e4;font-weight:normal;-webkit-text-stroke:0.12px #e4e4e4;left:2.8px;top:151.80px;letter-spacing:0.116px;">Usage</span>
<span style="position:absolute;white-space:pre;font-size:7.4px;line-height:8.88px;color:#fff;font-weight:bold;left:3px;top:173.66px;transform:scaleX(0.9460);transform-origin:0 50%;">Compute</span>
<span style="position:absolute;white-space:pre;font-size:7.0px;line-height:8.4px;color:#e4e4e4;font-weight:normal;-webkit-text-stroke:0.12px #e4e4e4;left:12.4px;top:184.90px;letter-spacing:-0.591px;">CPU</span>
<span style="position:absolute;white-space:pre;font-size:7.0px;line-height:8.4px;color:#e4e4e4;font-weight:normal;-webkit-text-stroke:0.12px #e4e4e4;left:12.4px;top:196.00px;letter-spacing:0.244px;">Memory</span>
<span style="position:absolute;white-space:pre;font-size:7.4px;line-height:8.88px;color:#fff;font-weight:bold;left:3px;top:217.76px;transform:scaleX(0.9667);transform-origin:0 50%;">Network</span>
<span style="position:absolute;white-space:pre;font-size:7.0px;line-height:8.4px;color:#e4e4e4;font-weight:normal;-webkit-text-stroke:0.12px #e4e4e4;left:12.4px;top:229.10px;letter-spacing:0.319px;">Network</span>
<span style="position:absolute;white-space:pre;font-size:9px;line-height:10.8px;color:#222;font-weight:normal;left:97.8px;top:53.60px;transform:scaleX(0.8372);transform-origin:0 50%;">Disk Activity</span>
<span style="position:absolute;white-space:pre;font-size:9px;line-height:10.8px;color:#222;font-weight:normal;left:250px;top:53.60px;transform:scaleX(0.7930);transform-origin:0 50%;">Top Shares by Usage</span>
<span style="position:absolute;white-space:pre;font-size:6.8px;line-height:8.16px;color:#222;font-weight:normal;left:402px;top:54.72px;transform:scaleX(0.7835);transform-origin:0 50%;">CPU</span>
<span style="position:absolute;white-space:pre;font-size:9px;line-height:10.8px;color:#222;font-weight:normal;left:554px;top:53.60px;transform:scaleX(0.7926);transform-origin:0 50%;">Pool Capacity and Usage</span>
<span style="position:absolute;white-space:pre;font-size:6.8px;line-height:8.16px;color:#222;font-weight:normal;left:98px;top:223.52px;transform:scaleX(0.8861);transform-origin:0 50%;">Memory</span>
<span style="position:absolute;white-space:pre;font-size:9px;line-height:10.8px;color:#222;font-weight:normal;left:250px;top:222.60px;transform:scaleX(0.8329);transform-origin:0 50%;">Network</span>
<span style="position:absolute;white-space:pre;font-size:9px;line-height:10.8px;color:#222;font-weight:normal;left:402px;top:222.60px;transform:scaleX(0.8183);transform-origin:0 50%;">Total Capacity, Allocation and Usage</span>
<span style="position:absolute;white-space:pre;font-size:6.4px;line-height:7.68px;color:#555;font-weight:normal;left:155px;top:77.46px;transform:scaleX(0.8736);transform-origin:0 50%;">ms on I/Os</span>
<span style="position:absolute;white-space:pre;font-size:6.4px;line-height:7.68px;color:#555;font-weight:normal;left:125.5px;top:88.46px;transform:scaleX(0.8942);transform-origin:0 50%;">kB read</span>
<span style="position:absolute;white-space:pre;font-size:6.4px;line-height:7.68px;color:#555;font-weight:normal;left:191.3px;top:88.46px;transform:scaleX(0.8766);transform-origin:0 50%;">kB written</span>
<span style="position:absolute;white-space:pre;font-size:6.4px;line-height:7.68px;color:#555;font-weight:normal;left:122.9px;top:119.46px;transform:scaleX(0.8872);transform-origin:0 50%;">Reads</span>
<span style="position:absolute;white-space:pre;font-size:6.4px;line-height:7.68px;color:#555;font-weight:normal;left:196.8px;top:119.46px;transform:scaleX(0.8500);transform-origin:0 50%;">Writes</span>
<span style="position:absolute;white-space:pre;font-size:6.4px;line-height:7.68px;color:#555;font-weight:normal;left:127.5px;top:138.96px;transform:scaleX(0.8822);transform-origin:0 50%;">ms reading</span>
<span style="position:absolute;white-space:pre;font-size:6.4px;line-height:7.68px;color:#555;font-weight:normal;left:181px;top:138.96px;transform:scaleX(0.8448);transform-origin:0 50%;">ms writing</span>
<span style="position:absolute;white-space:pre;font-size:6.4px;line-height:7.68px;color:#555;font-weight:normal;left:143px;top:150.96px;transform:scaleX(0.8762);transform-origin:0 50%;">virtio-Rockstor-00-part3</span>
<span style="position:absolute;white-space:pre;font-size:6.4px;line-height:7.68px;color:#555;font-weight:normal;left:133px;top:159.66px;transform:scaleX(0.8733);transform-origin:0 50%;">virtio-Data-00</span>
<span style="position:absolute;white-space:pre;font-size:6.4px;line-height:7.68px;color:#555;font-weight:normal;left:178px;top:159.66px;transform:scaleX(0.8603);transform-origin:0 50%;">virtio-Data-01</span>
<span style="position:absolute;white-space:pre;font-size:8.6px;line-height:10.32px;color:#222;font-weight:normal;left:102px;top:171.34px;transform:scaleX(0.8932);transform-origin:0 50%;">Top disks</span>
<span style="position:absolute;white-space:pre;font-size:7.4px;line-height:8.88px;color:#555;font-weight:normal;left:135.75px;top:173.06px;transform:scaleX(0.8769);transform-origin:0 50%;">sort by:</span>
<span style="position:absolute;white-space:pre;font-size:7px;line-height:8.4px;color:#555;font-weight:normal;left:162.5px;top:173.10px;transform:scaleX(0.9237);transform-origin:0 50%;">Best Draft</span>
<span style="position:absolute;white-space:pre;font-size:7.2px;line-height:8.64px;color:#d9603a;font-weight:normal;left:102px;top:193.58px;transform:scaleX(0.9020);transform-origin:0 50%;">Expand</span>
<span style="position:absolute;white-space:pre;font-size:7.2px;line-height:8.64px;color:#555;font-weight:normal;left:126px;top:193.58px;transform:scaleX(0.8662);transform-origin:0 50%;">for details</span>
<span style="position:absolute;white-space:pre;font-size:7.2px;line-height:8.64px;color:#808080;font-weight:normal;left:254.5px;top:77.68px;transform:scaleX(0.9018);transform-origin:0 50%;">Top 4 shares sorted by % used</span>
<span style="position:absolute;white-space:pre;font-size:6.7px;line-height:8.04px;color:#777;font-weight:normal;left:263.0px;top:90.88px;transform:scaleX(0.8224);transform-origin:0 50%;">0.02%</span>
<span style="position:absolute;white-space:pre;font-size:6.4px;line-height:7.68px;color:#222;font-weight:normal;left:328px;top:90.16px;transform:scaleX(0.8384);transform-origin:0 50%;">a(16.00 KB/102.40 MB)</span>
<span style="position:absolute;white-space:pre;font-size:6.7px;line-height:8.04px;color:#777;font-weight:normal;left:263.0px;top:103.08px;transform:scaleX(0.8224);transform-origin:0 50%;">0.00%</span>
<span style="position:absolute;white-space:pre;font-size:6.4px;line-height:7.68px;color:#222;font-weight:normal;left:329px;top:102.36px;transform:scaleX(0.8507);transform-origin:0 50%;">root(0 bytes/17.50 GB)</span>
<span style="position:absolute;white-space:pre;font-size:6.7px;line-height:8.04px;color:#777;font-weight:normal;left:263.0px;top:115.28px;transform:scaleX(0.8224);transform-origin:0 50%;">0.00%</span>
<span style="position:absolute;white-space:pre;font-size:6.4px;line-height:7.68px;color:#222;font-weight:normal;left:325px;top:114.56px;transform:scaleX(0.8474);transform-origin:0 50%;">home(0 bytes/17.50 GB)</span>
<span style="position:absolute;white-space:pre;font-size:6.7px;line-height:8.04px;color:#777;font-weight:normal;left:263.0px;top:127.48px;transform:scaleX(0.8224);transform-origin:0 50%;">0.00%</span>
<span style="position:absolute;white-space:pre;font-size:6.4px;line-height:7.68px;color:#222;font-weight:normal;left:324px;top:126.76px;transform:scaleX(0.8488);transform-origin:0 50%;">Questa(0 bytes/2.00 GB)</span>
<span style="position:absolute;white-space:pre;font-size:7.2px;line-height:8.64px;color:#808080;font-weight:normal;left:558px;top:77.68px;transform:scaleX(0.9009);transform-origin:0 50%;">Relative and absolute usage of system pools</span>
<span style="position:absolute;white-space:pre;font-size:6.7px;line-height:8.04px;color:#777;font-weight:normal;left:564.2px;top:90.88px;transform:scaleX(0.8287);transform-origin:0 50%;">17.56%</span>
<span style="position:absolute;white-space:pre;font-size:6.4px;line-height:7.68px;color:#222;font-weight:normal;left:621px;top:90.16px;transform:scaleX(0.8494);transform-origin:0 50%;">Nuova(359.54 MB/1.65 GB)</span>
<span style="position:absolute;white-space:pre;font-size:6.7px;line-height:8.04px;color:#777;font-weight:normal;left:564.2px;top:103.08px;transform:scaleX(0.8287);transform-origin:0 50%;">18.68%</span>
<span style="position:absolute;white-space:pre;font-size:6.4px;line-height:7.68px;color:#222;font-weight:normal;left:605.6px;top:102.36px;transform:scaleX(0.8498);transform-origin:0 50%;">rockstor_roc...(3.27 GB/14.23 GB)</span>
<span style="position:absolute;white-space:pre;font-size:7.2px;line-height:8.64px;color:#555;font-weight:bold;left:435.5px;top:77.58px;transform:scaleX(0.9387);transform-origin:0 50%;">Average CPU Usage (%)</span>
<span style="position:absolute;white-space:pre;font-size:6.2px;line-height:7.44px;color:#666;font-weight:normal;left:406.5px;top:82.98px;transform:scaleX(0.9161);transform-origin:0 50%;">100%</span>
<span style="position:absolute;white-space:pre;font-size:6.2px;line-height:7.44px;color:#666;font-weight:normal;left:409.8px;top:92.78px;transform:scaleX(0.9039);transform-origin:0 50%;">75%</span>
<span style="position:absolute;white-space:pre;font-size:6.2px;line-height:7.44px;color:#666;font-weight:normal;left:409.8px;top:102.18px;transform:scaleX(0.9039);transform-origin:0 50%;">50%</span>
<span style="position:absolute;white-space:pre;font-size:6.2px;line-height:7.44px;color:#666;font-weight:normal;left:409.8px;top:111.48px;transform:scaleX(0.9039);transform-origin:0 50%;">25%</span>
<span style="position:absolute;white-space:pre;font-size:6.2px;line-height:7.44px;color:#666;font-weight:normal;left:413.2px;top:121.58px;transform:scaleX(0.8712);transform-origin:0 50%;">0%</span>
<span style="position:absolute;white-space:pre;font-size:6.2px;line-height:7.44px;color:#666;font-weight:normal;left:431.5px;top:130.58px;transform:scaleX(0.9873);transform-origin:0 50%;">:15</span>
<span style="position:absolute;white-space:pre;font-size:6.2px;line-height:7.44px;color:#666;font-weight:normal;left:459.5px;top:130.58px;transform:scaleX(0.9873);transform-origin:0 50%;">:30</span>
<span style="position:absolute;white-space:pre;font-size:6.2px;line-height:7.44px;color:#666;font-weight:normal;left:487.5px;top:130.58px;transform:scaleX(0.9873);transform-origin:0 50%;">:45</span>
<span style="position:absolute;white-space:pre;font-size:6.2px;line-height:7.44px;color:#666;font-weight:normal;left:512.0px;top:130.58px;transform:scaleX(0.9687);transform-origin:0 50%;">21:47</span>
<span style="position:absolute;white-space:pre;font-size:6.4px;line-height:7.68px;color:#666;font-weight:normal;left:475px;top:136.36px;transform:scaleX(0.8949);transform-origin:0 50%;">Time</span>
<span style="position:absolute;white-space:pre;font-size:7.2px;line-height:8.64px;color:#555;font-weight:bold;left:434px;top:150.58px;transform:scaleX(0.9175);transform-origin:0 50%;">Individual CPU Usage (%)</span>
<span style="position:absolute;white-space:pre;font-size:6.2px;line-height:7.44px;color:#666;font-weight:normal;left:406.5px;top:156.98px;transform:scaleX(0.9161);transform-origin:0 50%;">100%</span>
<span style="position:absolute;white-space:pre;font-size:6.2px;line-height:7.44px;color:#666;font-weight:normal;left:409.8px;top:164.48px;transform:scaleX(0.9039);transform-origin:0 50%;">75%</span>
<span style="position:absolute;white-space:pre;font-size:6.2px;line-height:7.44px;color:#666;font-weight:normal;left:409.8px;top:171.98px;transform:scaleX(0.9039);transform-origin:0 50%;">50%</span>
<span style="position:absolute;white-space:pre;font-size:6.2px;line-height:7.44px;color:#666;font-weight:normal;left:409.8px;top:179.18px;transform:scaleX(0.9039);transform-origin:0 50%;">25%</span>
<span style="position:absolute;white-space:pre;font-size:6.2px;line-height:7.44px;color:#666;font-weight:normal;left:413.2px;top:186.78px;transform:scaleX(0.8712);transform-origin:0 50%;">0%</span>
<span style="position:absolute;white-space:pre;font-size:6.2px;line-height:7.44px;color:#666;font-weight:normal;left:427.5px;top:195.18px;transform:scaleX(0.9278);transform-origin:0 50%;">cpu0 cpu1</span>
<span style="position:absolute;white-space:pre;font-size:7px;line-height:8.4px;color:#777;font-weight:normal;left:421.5px;top:203.90px;transform:scaleX(0.9755);transform-origin:0 50%;">smode</span>
<span style="position:absolute;white-space:pre;font-size:7px;line-height:8.4px;color:#777;font-weight:normal;left:456.5px;top:203.90px;transform:scaleX(0.9810);transform-origin:0 50%;">umode</span>
<span style="position:absolute;white-space:pre;font-size:7px;line-height:8.4px;color:#777;font-weight:normal;left:492px;top:203.90px;transform:scaleX(0.9832);transform-origin:0 50%;">umode_nice</span>
<span style="position:absolute;white-space:pre;font-size:7.2px;line-height:8.64px;color:#444;font-weight:bold;left:140px;top:246.08px;transform:scaleX(0.9291);transform-origin:0 50%;">Memory Usage (%)</span>
<span style="position:absolute;white-space:pre;font-size:6.4px;line-height:7.68px;color:#555;font-weight:normal;left:102.25px;top:251.66px;transform:scaleX(0.8828);transform-origin:0 50%;">100 %</span>
<span style="position:absolute;white-space:pre;font-size:6.4px;line-height:7.68px;color:#555;font-weight:normal;left:105.75px;top:266.66px;transform:scaleX(0.8574);transform-origin:0 50%;">50 %</span>
<span style="position:absolute;white-space:pre;font-size:6.4px;line-height:7.68px;color:#555;font-weight:normal;left:109px;top:281.86px;transform:scaleX(0.8397);transform-origin:0 50%;">0 %</span>
<span style="position:absolute;white-space:pre;font-size:6.2px;line-height:7.44px;color:#666;font-weight:normal;left:128.75px;top:286.38px;transform:scaleX(0.9873);transform-origin:0 50%;">:15</span>
<span style="position:absolute;white-space:pre;font-size:6.2px;line-height:7.44px;color:#666;font-weight:normal;left:156.25px;top:286.38px;transform:scaleX(0.9873);transform-origin:0 50%;">:30</span>
<span style="position:absolute;white-space:pre;font-size:6.2px;line-height:7.44px;color:#666;font-weight:normal;left:183.25px;top:286.38px;transform:scaleX(0.9873);transform-origin:0 50%;">:45</span>
<span style="position:absolute;white-space:pre;font-size:6.2px;line-height:7.44px;color:#666;font-weight:normal;left:206.75px;top:286.38px;transform:scaleX(0.9687);transform-origin:0 50%;">21:47</span>
<span style="position:absolute;white-space:pre;font-size:6.4px;line-height:7.68px;color:#666;font-weight:normal;left:172px;top:296.86px;transform:scaleX(0.8591);transform-origin:0 50%;">Time</span>
<span style="position:absolute;white-space:pre;font-size:6.4px;line-height:7.68px;color:#555;font-weight:normal;left:127.75px;top:305.46px;transform:scaleX(0.9273);transform-origin:0 50%;">used 40.61 %</span>
<span style="position:absolute;white-space:pre;font-size:6.4px;line-height:7.68px;color:#555;font-weight:normal;left:175px;top:305.46px;transform:scaleX(0.9052);transform-origin:0 50%;">cached 27.73 %</span>
<span style="position:absolute;white-space:pre;font-size:6.4px;line-height:7.68px;color:#555;font-weight:normal;left:131.5px;top:313.86px;transform:scaleX(0.9125);transform-origin:0 50%;">buffers 0.22 %</span>
<span style="position:absolute;white-space:pre;font-size:6.4px;line-height:7.68px;color:#555;font-weight:normal;left:180.25px;top:313.86px;transform:scaleX(0.9172);transform-origin:0 50%;">free 31.45 %</span>
<span style="position:absolute;white-space:pre;font-size:7.2px;line-height:8.64px;color:#444;font-weight:bold;left:151px;top:327.58px;transform:scaleX(0.8974);transform-origin:0 50%;">Swap Usage</span>
<span style="position:absolute;white-space:pre;font-size:6.4px;line-height:7.68px;color:#555;font-weight:normal;left:214.5px;top:357.36px;transform:scaleX(0.9061);transform-origin:0 50%;">2.00 GB</span>
<span style="position:absolute;white-space:pre;font-size:6.4px;line-height:7.68px;color:#555;font-weight:normal;left:127.75px;top:368.56px;transform:scaleX(0.9114);transform-origin:0 50%;">Used 4.74 % (97.05 MB / 2.00 GB)</span>
<span style="position:absolute;white-space:pre;font-size:5.6px;line-height:6.72px;color:#555;font-weight:normal;left:261.75px;top:244.84px;transform:scaleX(0.9016);transform-origin:0 50%;">48.83 KB</span>
<span style="position:absolute;white-space:pre;font-size:5.6px;line-height:6.72px;color:#555;font-weight:normal;left:261.75px;top:254.54px;transform:scaleX(0.9016);transform-origin:0 50%;">39.06 KB</span>
<span style="position:absolute;white-space:pre;font-size:5.6px;line-height:6.72px;color:#555;font-weight:normal;left:261.75px;top:264.34px;transform:scaleX(0.9016);transform-origin:0 50%;">29.30 KB</span>
<span style="position:absolute;white-space:pre;font-size:5.6px;line-height:6.72px;color:#555;font-weight:normal;left:261.75px;top:274.04px;transform:scaleX(0.9016);transform-origin:0 50%;">19.53 KB</span>
<span style="position:absolute;white-space:pre;font-size:5.6px;line-height:6.72px;color:#555;font-weight:normal;left:264.25px;top:283.74px;transform:scaleX(0.9168);transform-origin:0 50%;">9.77 KB</span>
<span style="position:absolute;white-space:pre;font-size:5.6px;line-height:6.72px;color:#555;font-weight:normal;left:265.5px;top:293.34px;transform:scaleX(0.9420);transform-origin:0 50%;">0 bytes</span>
<span style="position:absolute;white-space:pre;font-size:5.6px;line-height:6.72px;color:#555;font-weight:normal;left:372.5px;top:244.84px;transform:scaleX(0.8562);transform-origin:0 50%;">100</span>
<span style="position:absolute;white-space:pre;font-size:5.6px;line-height:6.72px;color:#555;font-weight:normal;left:372.5px;top:254.54px;transform:scaleX(0.8662);transform-origin:0 50%;">80</span>
<span style="position:absolute;white-space:pre;font-size:5.6px;line-height:6.72px;color:#555;font-weight:normal;left:372.5px;top:264.34px;transform:scaleX(0.8662);transform-origin:0 50%;">60</span>
<span style="position:absolute;white-space:pre;font-size:5.6px;line-height:6.72px;color:#555;font-weight:normal;left:372.5px;top:274.04px;transform:scaleX(0.8662);transform-origin:0 50%;">40</span>
<span style="position:absolute;white-space:pre;font-size:5.6px;line-height:6.72px;color:#555;font-weight:normal;left:372.5px;top:283.74px;transform:scaleX(0.8662);transform-origin:0 50%;">20</span>
<span style="position:absolute;white-space:pre;font-size:5.6px;line-height:6.72px;color:#555;font-weight:normal;left:372.5px;top:293.34px;transform:scaleX(0.8640);transform-origin:0 50%;">0</span>
<span style="position:absolute;white-space:pre;font-size:5.6px;line-height:6.72px;color:#555;font-weight:normal;left:303.8px;top:302.34px;transform:scaleX(0.9286);transform-origin:0 50%;">21:45</span>
<span style="position:absolute;white-space:pre;font-size:5.6px;line-height:6.72px;color:#555;font-weight:normal;left:329.75px;top:302.34px;transform:scaleX(0.9286);transform-origin:0 50%;">21:46</span>
<span style="position:absolute;white-space:pre;font-size:5.6px;line-height:6.72px;color:#555;font-weight:normal;left:356.0px;top:302.34px;transform:scaleX(0.9286);transform-origin:0 50%;">21:47</span>
<span style="position:absolute;white-space:pre;font-size:6.4px;line-height:7.68px;color:#666;font-weight:normal;left:321.25px;top:306.86px;transform:scaleX(0.8949);transform-origin:0 50%;">Time</span>
<span style="position:absolute;white-space:pre;font-size:6.6px;line-height:7.92px;color:#666;font-weight:normal;left:250.03px;top:266.42px;transform:rotate(-90deg) scaleX(0.8430);transform-origin:50% 50%;">Data</span>
<span style="position:absolute;white-space:pre;font-size:6.6px;line-height:7.92px;color:#666;font-weight:normal;left:374.77px;top:266.42px;transform:rotate(90deg) scaleX(0.8842);transform-origin:50% 50%;">Packets</span>
<span style="position:absolute;white-space:pre;font-size:7px;line-height:8.4px;color:#666;font-weight:normal;left:262px;top:319.00px;transform:scaleX(0.9162);transform-origin:0 50%;">Data rec</span>
<span style="position:absolute;white-space:pre;font-size:7px;line-height:8.4px;color:#666;font-weight:normal;left:295px;top:319.00px;transform:scaleX(0.9176);transform-origin:0 50%;">Data sent</span>
<span style="position:absolute;white-space:pre;font-size:7px;line-height:8.4px;color:#666;font-weight:normal;left:262px;top:329.00px;transform:scaleX(0.9432);transform-origin:0 50%;">Packets rec</span>
<span style="position:absolute;white-space:pre;font-size:7px;line-height:8.4px;color:#666;font-weight:normal;left:305px;top:329.00px;transform:scaleX(0.9481);transform-origin:0 50%;">Packets sent</span>
<span style="position:absolute;white-space:pre;font-size:6.2px;line-height:7.44px;color:#333;font-weight:normal;left:345.75px;top:319.48px;transform:scaleX(0.8431);transform-origin:0 50%;">Interface:</span>
<span style="position:absolute;white-space:pre;font-size:3.6px;line-height:4.32px;color:#333;font-weight:normal;left:348px;top:332.34px;transform:scaleX(1.0667);transform-origin:0 50%;">lo</span>
<span style="position:absolute;white-space:pre;font-size:7.4px;line-height:8.88px;color:#333;font-weight:normal;left:489px;top:252.56px;transform:scaleX(0.8884);transform-origin:0 50%;">16.53 GB</span>
<span style="position:absolute;white-space:pre;font-size:7.4px;line-height:8.88px;color:#333;font-weight:normal;left:417.6px;top:270.16px;transform:scaleX(0.9194);transform-origin:0 50%;">2.97 GB (15.25%)</span>
<span style="position:absolute;white-space:pre;font-size:7.4px;line-height:8.88px;color:#333;font-weight:normal;left:503px;top:285.26px;transform:scaleX(0.8940);transform-origin:0 50%;">2.00 GB</span>
<span style="position:absolute;white-space:pre;font-size:7.4px;line-height:8.88px;color:#333;font-weight:normal;left:417.6px;top:303.16px;transform:scaleX(0.9150);transform-origin:0 50%;">19.50 GB (90.70%)</span>
<span style="position:absolute;white-space:pre;font-size:7.4px;line-height:8.88px;color:#333;font-weight:normal;left:505.75px;top:318.96px;transform:scaleX(0.9017);transform-origin:0 50%;">0 bytes</span>
<span style="position:absolute;white-space:pre;font-size:7.4px;line-height:8.88px;color:#333;font-weight:normal;left:417.6px;top:336.76px;transform:scaleX(0.9148);transform-origin:0 50%;">21.50 GB (100.00%)</span>
<span style="position:absolute;white-space:pre;font-size:6.6px;line-height:7.92px;color:#666;font-weight:normal;left:515.75px;top:346.04px;transform:scaleX(0.8794);transform-origin:0 50%;">21.50 GB</span>
<span style="position:absolute;white-space:pre;font-size:6.8px;line-height:8.16px;color:#444;font-weight:normal;left:403.53px;top:260.05px;transform:rotate(-90deg) scaleX(1.0094);transform-origin:50% 50%;">Shares</span>
<span style="position:absolute;white-space:pre;font-size:6.8px;line-height:8.16px;color:#444;font-weight:normal;left:405.79px;top:293.42px;transform:rotate(-90deg) scaleX(0.9403);transform-origin:50% 50%;">Pools</span>
<span style="position:absolute;white-space:pre;font-size:6.8px;line-height:8.16px;color:#444;font-weight:normal;left:405.99px;top:326.05px;transform:rotate(-90deg) scaleX(0.9774);transform-origin:50% 50%;">Disks</span>
<span style="position:absolute;white-space:pre;font-size:6.4px;line-height:7.68px;color:#555;font-weight:normal;left:414.25px;top:362.06px;transform:scaleX(0.8377);transform-origin:0 50%;">Used</span>
<span style="position:absolute;white-space:pre;font-size:6.4px;line-height:7.68px;color:#555;font-weight:normal;left:443.25px;top:362.06px;transform:scaleX(0.8461);transform-origin:0 50%;">Allocated</span>
<span style="position:absolute;white-space:pre;font-size:6.4px;line-height:7.68px;color:#555;font-weight:normal;left:488.25px;top:362.06px;transform:scaleX(0.8606);transform-origin:0 50%;">Provisioned</span>
<span style="position:absolute;white-space:pre;font-size:6.4px;line-height:7.68px;color:#555;font-weight:normal;left:414.25px;top:371.86px;transform:scaleX(0.8342);transform-origin:0 50%;">Capacity</span>
<span style="position:absolute;white-space:pre;font-size:6.4px;line-height:7.68px;color:#555;font-weight:normal;left:443.25px;top:371.86px;transform:scaleX(0.8550);transform-origin:0 50%;">Raid Overhead</span>
<span style="position:absolute;white-space:pre;font-size:6.4px;line-height:7.68px;color:#555;font-weight:normal;left:488.25px;top:371.86px;transform:scaleX(0.8561);transform-origin:0 50%;">Free</span>
</div>
</body></html>
